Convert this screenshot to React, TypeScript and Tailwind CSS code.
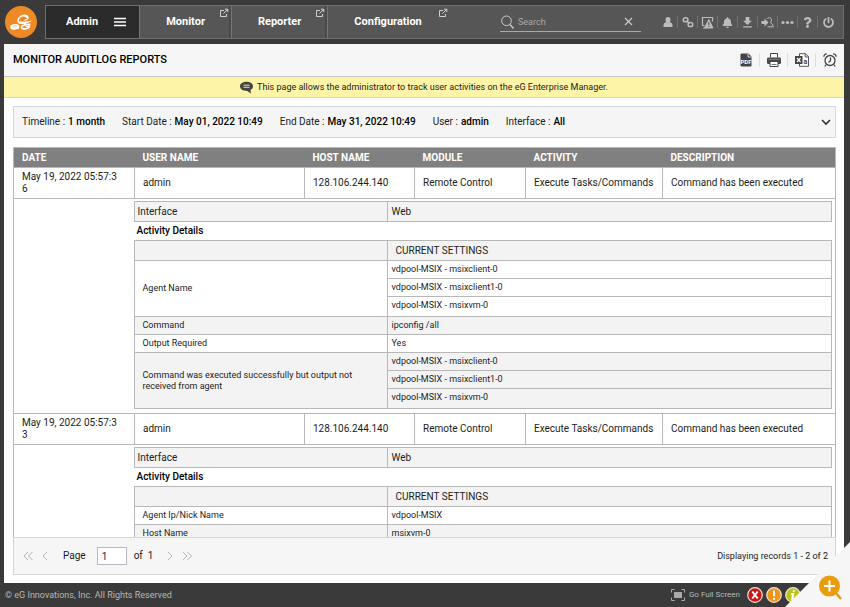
import type { ReactNode } from "react";
import { FaBell, FaPowerOff, FaQuestion } from "react-icons/fa";
import { MdFileDownload } from "react-icons/md";

type Setting = { name: string; values: string[] };

type AuditRecord = {
  date: string;
  user: string;
  host: string;
  module: string;
  activity: string;
  description: string;
  via: string;
  settings: Setting[];
};

const AGENTS = [
  "vdpool-MSIX - msixclient-0",
  "vdpool-MSIX - msixclient1-0",
  "vdpool-MSIX - msixvm-0",
];

const RECORDS: AuditRecord[] = [
  {
    date: "May 19, 2022 05:57:36",
    user: "admin",
    host: "128.106.244.140",
    module: "Remote Control",
    activity: "Execute Tasks/Commands",
    description: "Command has been executed",
    via: "Web",
    settings: [
      { name: "Agent Name", values: AGENTS },
      { name: "Command", values: ["ipconfig /all"] },
      { name: "Output Required", values: ["Yes"] },
      {
        name: "Command was executed successfully but output not received from agent",
        values: AGENTS,
      },
    ],
  },
  {
    date: "May 19, 2022 05:57:33",
    user: "admin",
    host: "128.106.244.140",
    module: "Remote Control",
    activity: "Execute Tasks/Commands",
    description: "Command has been executed",
    via: "Web",
    settings: [
      { name: "Agent Ip/Nick Name", values: ["vdpool-MSIX"] },
      { name: "Host Name", values: ["msixvm-0"] },
    ],
  },
];

const FILTERS = [
  ["Timeline", "1 month"],
  ["Start Date", "May 01, 2022 10:49"],
  ["End Date", "May 31, 2022 10:49"],
  ["User", "admin"],
  ["Interface", "All"],
];

const COLUMNS = [
  "DATE",
  "USER NAME",
  "HOST NAME",
  "MODULE",
  "ACTIVITY",
  "DESCRIPTION",
];

function Logo() {
  return (
    <svg viewBox="0 0 32 32" className="size-8" role="img" aria-label="eG">
      <circle cx="16" cy="16" r="16" fill="#ee8a25" />
      <path
        d="M21 17c-4 .8-8 .2-8-2 0-2.500 2.500-5.500 6-5.800 2.700-.2 4.300 1.100 4 2.800-.2 1.200-1.500 2-3.500 2.300"
        fill="none"
        stroke="#fff"
        strokeWidth="1.400"
      />
      <path d="M16.500 10c2-1.500 5-1.300 6.200.3.800 1 .5 2.300-.5 3-.2-1.700-2.200-3-5.700-3.300z" fill="#fff" />
      <path d="M14 15.200c4 .8 9 .6 13-.7-1.500 1.800-4.500 2.800-7.500 2.800-2.500 0-4.500-.6-5.500-2.100z" fill="#fff" />
      <path
        d="M7 21h6.500c.4-1.500-1-2.300-3-2.300-2.500 0-4.500 1-4.500 2.500 0 2 4.500 2.200 8 .6"
        fill="none"
        stroke="#fff"
        strokeWidth="1.600"
      />
      <path
        d="M25.500 18.700c-3.500-.6-8.300 0-9 2.200-.5 2.300 4.500 2.600 7 1l.6-1.400h-3.600"
        fill="none"
        stroke="#fff"
        strokeWidth="1.700"
      />
    </svg>
  );
}

function PopoutIcon() {
  return (
    <svg viewBox="0 0 10 10" className="size-2.5" fill="none" stroke="#d0d0d0" aria-hidden="true">
      <path d="M5 2.500H1.500v6h6V6M4.500 5.500l4-4M6 1.200h2.800V4" />
    </svg>
  );
}

function UserIcon() {
  return (
    <svg viewBox="0 0 10 10" className="size-2.5" fill="currentColor" aria-hidden="true">
      <ellipse cx="5" cy="2.900" rx="2.500" ry="2.900" />
      <path d="M.5 10V8c0-1.500 1.500-2.500 2.700-2.700h3.600C8 5.500 9.500 6.500 9.500 8v2z" />
    </svg>
  );
}

function LinksIcon() {
  return (
    <svg viewBox="0 0 12 12" className="size-3" fill="none" stroke="currentColor" aria-hidden="true">
      <rect x="1.300" y="1.800" width="4.600" height="4" rx="1.900" strokeWidth="1.500" />
      <rect x="6.100" y="6.600" width="4.600" height="4" rx="1.900" strokeWidth="1.500" />
      <path d="m4.300 4.800 3.400 2.800" strokeWidth="1.300" />
    </svg>
  );
}

function AlarmMonitorIcon() {
  return (
    <svg viewBox="0 0 13 13" className="size-[13px]" fill="none" stroke="currentColor" aria-hidden="true">
      <path d="M3.500 9.500h-2v-8h10v4M2 12h2" strokeWidth="1.200" />
      <path d="M7.800 3.500 12 12H3.500z" fill="currentColor" />
      <path d="M7.800 6v3M7.800 9.800v1.200" stroke="#565656" strokeWidth="1.100" />
    </svg>
  );
}

function SwitchUserIcon() {
  return (
    <svg viewBox="0 0 13 13" className="size-[13px]" fill="none" stroke="currentColor" aria-hidden="true">
      <path d="M.5 5h3V2.500l4 4-4 4V8h-3z" fill="currentColor" stroke="none" />
      <path d="M6 2.800C7 1.200 10.500 1.300 10.500 4c0 1.300-.8 1.800-.8 2.800 0 1 2.600.8 2.600 4H6.500" />
    </svg>
  );
}

function DotsIcon() {
  return (
    <svg viewBox="0 0 13 13" className="size-[13px]" fill="currentColor" aria-hidden="true">
      <circle cx="2" cy="6.500" r="1.600" />
      <circle cx="6.500" cy="6.500" r="1.600" />
      <circle cx="11" cy="6.500" r="1.600" />
    </svg>
  );
}

function PdfIcon() {
  return (
    <svg viewBox="0 0 14 14" className="size-3.5" aria-hidden="true">
      <path d="M1.500 1.500A1 1 0 0 1 2.500.5h7l3 3v9a1 1 0 0 1-1 1h-9a1 1 0 0 1-1-1z" fill="#444" />
      <path d="M9 .5v3.500h3.500" fill="none" stroke="#f6f6f6" strokeWidth=".8" />
      <text x="7" y="10.800" textAnchor="middle" fontSize="6" fontWeight="700" fill="#fff">
        PDF
      </text>
    </svg>
  );
}

function PrintIcon() {
  return (
    <svg viewBox="0 0 14 14" className="size-3.5" aria-hidden="true">
      <path d="M3.500 4.500v-4h7v4" fill="#fff" stroke="#444" />
      <rect x="0" y="4.500" width="14" height="6.500" rx="1.300" fill="#4a4a4a" />
      <path d="M3 8.500h8v5H3z" fill="#fff" stroke="#444" />
      <path d="M4.500 11.500h5" stroke="#777" />
      <path d="M1.500 6.300h11" stroke="#999" strokeWidth=".7" />
    </svg>
  );
}

function ExcelIcon() {
  return (
    <svg viewBox="0 0 14 14" className="size-3.5" aria-hidden="true">
      <path d="M4.500.7h6l3 3v9.600h-9z" fill="#fff" stroke="#555" />
      <path d="M10.200.7v3.300h3.300" fill="none" stroke="#555" />
      <rect x="0" y="3" width="7.500" height="8" fill="#444" />
      <path d="m2 5 3.500 4M5.500 5 2 9" stroke="#fff" strokeWidth="1.200" />
      <text x="10.300" y="10.500" textAnchor="middle" fontSize="7" fontWeight="700" fill="#444">
        a
      </text>
    </svg>
  );
}

function AlarmIcon() {
  return (
    <svg viewBox="0 0 14 14" className="size-3.5" fill="none" stroke="#444" strokeWidth="1.300" aria-hidden="true">
      <circle cx="7" cy="7.500" r="5" />
      <path d="M7.500 4.500v3.300L5.500 9.500M.8 3.800C.8 2 2 .9 3.800.9M13.200 3.800C13.200 2 12 .9 10.200.9M3.200 11.500l-1.400 2M10.800 11.500l1.400 2" />
    </svg>
  );
}

function BubbleIcon() {
  return (
    <svg viewBox="0 0 13 13" className="size-[13px]" aria-hidden="true">
      <path d="M6.500.8C10 .8 13 2.500 13 5.300c0 1.600-.9 2.900-2.500 3.700L11 12.500 7.300 9.900C3.500 10.100 0 8.300 0 5.300 0 2.500 3 .8 6.500.8z" fill="#444" />
      <path d="M3.500 4.200h6M3.500 6.300h6" stroke="#fdf4a8" strokeWidth=".9" />
    </svg>
  );
}

function PagerButton({ label, d }: { label: string; d: string }) {
  return (
    <button type="button" aria-label={label} className="w-[17px]">
      <svg viewBox="0 0 10 10" className="size-2.5" fill="none" stroke="#b4b4b4" aria-hidden="true">
        <path d={d} />
      </svg>
    </button>
  );
}

function Tab({ label, last }: { label: string; last?: boolean }) {
  return (
    <a
      href="#"
      className={
        last
          ? "relative flex items-center pr-7 pl-[26px]"
          : "relative flex items-center border-r border-[#777] pr-[26px] pl-[26px] shadow-[inset_-2px_0_0_#4a4a4a]"
      }
    >
      {label}
      <span className="absolute top-0.5 right-0.5">
        <PopoutIcon />
      </span>
    </a>
  );
}

function Header() {
  const tools: [string, ReactNode][] = [
    ["Profile", <UserIcon />],
    ["Links", <LinksIcon />],
    ["Alarms", <AlarmMonitorIcon />],
    ["Notifications", <FaBell size={11} />],
    ["Downloads", <MdFileDownload size={15} />],
    ["Switch user", <SwitchUserIcon />],
    ["More", <DotsIcon />],
    ["Help", <FaQuestion size={11} />],
    ["Sign out", <FaPowerOff size={11} />],
  ];
  return (
    <header className="flex shrink-0 items-center gap-2 py-[5px] pr-1.5 pl-[5px]">
      <Logo />
      <div className="flex h-[34px] flex-1 border border-[#6e6e6e] bg-[#565656] text-[11px] font-bold text-white">
        <nav className="flex">
          <a href="#" className="flex items-center gap-4 border-r border-[#777] bg-[#2b2b2b] pr-[13px] pl-5">
            Admin
            <svg viewBox="0 0 12 10" className="h-2.5 w-3" stroke="#fff" strokeWidth="1.500" aria-hidden="true">
              <path d="M0 1.500h12M0 5h12M0 8.500h12" />
            </svg>
          </a>
          <Tab label="Monitor" />
          <Tab label="Reporter" />
          <Tab label="Configuration" last />
        </nav>
        <div className="ml-auto flex items-center">
          <label className="mr-[17px] flex h-5 w-[141px] items-center gap-1 border-b border-[#aaa]">
            <svg viewBox="0 0 14 14" className="size-3.5 shrink-0" fill="none" stroke="#ccc" aria-hidden="true">
              <circle cx="6.500" cy="5.800" r="4.800" />
              <path d="m10 9.500 3.500 4" strokeWidth="1.300" />
            </svg>
            <input
              type="text"
              aria-label="Search"
              placeholder="Search"
              className="min-w-0 flex-1 text-[9px] font-normal outline-none placeholder:text-[#a8a8a8]"
            />
            <button type="button" aria-label="Clear search" className="mr-2">
              <svg viewBox="0 0 9 9" className="size-[9px]" stroke="#ccc" strokeWidth="1.200" aria-hidden="true">
                <path d="m1 1 7 7M8 1 1 8" />
              </svg>
            </button>
          </label>
          <div className="mr-[5px] flex divide-x divide-[#707070] text-[#bcbcbc]">
            {tools.map(([label, icon]) => (
              <button
                key={label}
                type="button"
                aria-label={label}
                className="flex h-3 w-5 items-center justify-center"
              >
                {icon}
              </button>
            ))}
          </div>
        </div>
      </div>
    </header>
  );
}

function TitleBar() {
  const actions: [string, ReactNode][] = [
    ["Save as PDF", <PdfIcon />],
    ["Print", <PrintIcon />],
    ["Save as Excel", <ExcelIcon />],
    ["Schedule", <AlarmIcon />],
  ];
  return (
    <div className="flex h-[33px] shrink-0 items-center justify-between border-b border-[#c4c4c4] bg-[#f6f6f6] pl-[9px]">
      <h1 className="text-[11px] font-medium text-black">MONITOR AUDITLOG REPORTS</h1>
      <div className="flex divide-x divide-[#ddd]">
        {actions.map(([label, icon]) => (
          <button
            key={label}
            type="button"
            aria-label={label}
            className="flex h-3.5 w-7 items-center justify-center"
          >
            {icon}
          </button>
        ))}
      </div>
    </div>
  );
}

function Filters() {
  return (
    <div className="flex h-8 shrink-0 items-center justify-between border border-[#d4d7da] bg-[#f5f5f5] px-2">
      <dl className="flex gap-[17px] text-[10px]">
        {FILTERS.map(([name, value]) => (
          <div key={name} className="flex gap-[3px]">
            <dt>{name} :</dt>
            <dd className="font-medium text-black">{value}</dd>
          </div>
        ))}
      </dl>
      <button type="button" aria-label="Show filters">
        <svg viewBox="0 0 10 10" className="-mr-1 size-2.5" fill="none" stroke="#333" strokeWidth="1.600" aria-hidden="true">
          <path d="m1 3 4 4 4-4" />
        </svg>
      </button>
    </div>
  );
}

function Details({ record }: { record: AuditRecord }) {
  return (
    <div className="-ml-px pt-[2px] pr-[3px] pb-1">
      <table className="w-full table-fixed border-collapse border border-[#b8b8b8] bg-[#f3f3f3] text-[10px]">
        <tbody>
          <tr className="h-5">
            <th scope="row" className="w-[253px] border border-[#b8b8b8] px-[3px] text-left font-normal">
              Interface
            </th>
            <td className="px-1">{record.via}</td>
          </tr>
        </tbody>
      </table>
      <h2 className="px-[3px] text-[10px] leading-[18px] font-medium text-black">Activity Details</h2>
      <table className="w-full table-fixed border-collapse text-[9px]">
        <thead>
          <tr className="h-5 bg-[#f3f3f3] text-[10px]">
            <td className="w-[253px] border border-[#b8b8b8]" />
            <th scope="col" className="border border-[#b8b8b8] px-2 text-left font-normal">
              CURRENT SETTINGS
            </th>
          </tr>
        </thead>
        <tbody>
          {record.settings.map((setting) => (
            <tr key={setting.name} className="odd:bg-white even:bg-[#f3f3f3]">
              <th scope="row" className="border border-[#b8b8b8] pr-6 pl-2 text-left leading-[11px] font-normal">
                {setting.name}
              </th>
              <td className="border border-[#b8b8b8] p-0">
                <ul>
                  {setting.values.map((value) => (
                    <li
                      key={value}
                      className="h-[18px] border-b border-[#b8b8b8] px-1 leading-[17px] last:h-[19px] last:border-b-0 only:h-[17px]"
                    >
                      {value}
                    </li>
                  ))}
                </ul>
              </td>
            </tr>
          ))}
        </tbody>
      </table>
    </div>
  );
}

function AuditTable() {
  const cell = "border border-[#b8b8b8] px-2";
  return (
    <table className="w-full table-fixed border-collapse border border-[#b8b8b8] text-[10px]">
      <thead>
        <tr className="h-5 bg-[#808080] text-left text-white">
          {COLUMNS.map((column) => (
            <th
              key={column}
              scope="col"
              className="px-2 font-bold nth-1:w-[121px] nth-2:w-[170px] nth-3:w-[110px] nth-4:w-[111px] nth-5:w-[137px]"
            >
              {column}
            </th>
          ))}
        </tr>
      </thead>
      {RECORDS.map((record) => (
        <tbody key={record.date}>
          <tr className="h-[31px]">
            <td className={`${cell} leading-3 break-all`}>
              <div className="w-[98px]">{record.date}</div>
            </td>
            <td className={cell}>{record.user}</td>
            <td className={cell}>{record.host}</td>
            <td className={cell}>{record.module}</td>
            <td className={`${cell} whitespace-nowrap`}>{record.activity}</td>
            <td className={cell}>{record.description}</td>
          </tr>
          <tr>
            <td />
            <td colSpan={5} className="p-0">
              <Details record={record} />
            </td>
          </tr>
        </tbody>
      ))}
    </table>
  );
}

function Pager() {
  return (
    <div className="flex h-[38px] shrink-0 items-center justify-between border border-[#d5d5d5] bg-[#f6f6f6] pr-[7px] pl-[9px] text-[10px]">
      <div className="flex items-center">
        <PagerButton label="First page" d="M5 1 1 5l4 4M9.500 1l-4 4 4 4" />
        <PagerButton label="Previous page" d="M7 1 3 5l4 4" />
        <label className="ml-1.5 flex items-center gap-[11px]">
          Page
          <input
            type="text"
            defaultValue="1"
            className="h-[18px] w-[30px] border border-[#b5b8c8] bg-white px-1"
          />
        </label>
        <span className="mr-3 ml-[7px] flex gap-[5px]">
          <span>of</span>
          <span>1</span>
        </span>
        <PagerButton label="Next page" d="m3 1 4 4-4 4" />
        <PagerButton label="Last page" d="m1 1 4 4-4 4M5.500 1l4 4-4 4" />
      </div>
      <p className="text-[9px]">Displaying records 1 - 2 of 2</p>
    </div>
  );
}

function StatusButton({ label, fill, d }: { label: string; fill: string; d: string }) {
  return (
    <button type="button" aria-label={label}>
      <svg viewBox="0 0 16 16" className="size-4" aria-hidden="true">
        <circle cx="8" cy="8" r="7.300" fill={fill} stroke="#f1e4d4" strokeWidth="1.200" />
        <path d={d} stroke="#fff" strokeWidth="2" fill="none" />
      </svg>
    </button>
  );
}

function Footer() {
  return (
    <footer className="flex h-6 shrink-0 items-center justify-between pr-[49px] pl-[5px] text-[9px] text-[#b8b8b8]">
      <p>© eG Innovations, Inc. All Rights Reserved</p>
      <div className="flex items-center gap-[3px]">
        <button type="button" className="mr-1 flex items-center gap-1 text-[8px]">
          <svg viewBox="0 0 14 12" className="h-3 w-3.5" fill="none" stroke="#aaa" aria-hidden="true">
            <path d="M.5 3.500v-3h3M10.500.5h3v3M13.500 8.500v3h-3M3.500 11.500h-3v-3" />
            <rect x="3.500" y="3.500" width="7" height="5" fill="#aaa" />
          </svg>
          Go Full Screen
        </button>
        <StatusButton label="Critical alarms" fill="#cb1517" d="m5.300 4.500 5.400 7M10.700 4.500l-5.400 7" />
        <StatusButton label="Major alarms" fill="#f3941c" d="M8 3.500v5.800M8 10.700v2" />
        <StatusButton label="Minor alarms" fill="#bcc31b" d="M9 3.200 8.600 5M6 7h2.200l-1 4.700h2.300" />
      </div>
    </footer>
  );
}

export default function App() {
  return (
    <div className="relative flex h-screen flex-col overflow-hidden bg-[#3a3a3a] font-['Roboto',sans-serif] leading-4 text-[#1c1c1c]">
      <Header />
      <main className="mr-1.5 ml-1 flex min-h-0 flex-1 flex-col bg-white">
        <TitleBar />
        <p className="flex h-[21px] shrink-0 items-center justify-center gap-1 border-b border-[#e2dba0] bg-[#fdf4a8] text-[9px]">
          <BubbleIcon />
          This page allows the administrator to track user activities on the eG Enterprise Manager.
        </p>
        <div className="flex min-h-0 flex-1 flex-col pt-2 pr-2 pb-2 pl-[9px]">
          <Filters />
          <div className="mt-[9px] min-h-0 flex-1 overflow-hidden">
            <AuditTable />
          </div>
          <Pager />
        </div>
      </main>
      <Footer />
      <button type="button" aria-label="Zoom in" className="absolute right-0 bottom-0">
        <svg viewBox="0 0 65 65" className="size-[65px]" aria-hidden="true">
          <path d="M65 0v65H0z" fill="#f6f6f6" />
          <path d="m50 50 6 7" stroke="#eb9c0c" strokeWidth="2.500" />
          <circle cx="44.500" cy="44" r="10.500" fill="#eb9c0c" />
          <path d="M44.500 38.500v11M39 44h11" stroke="#fff" strokeWidth="2" />
        </svg>
      </button>
    </div>
  );
}
